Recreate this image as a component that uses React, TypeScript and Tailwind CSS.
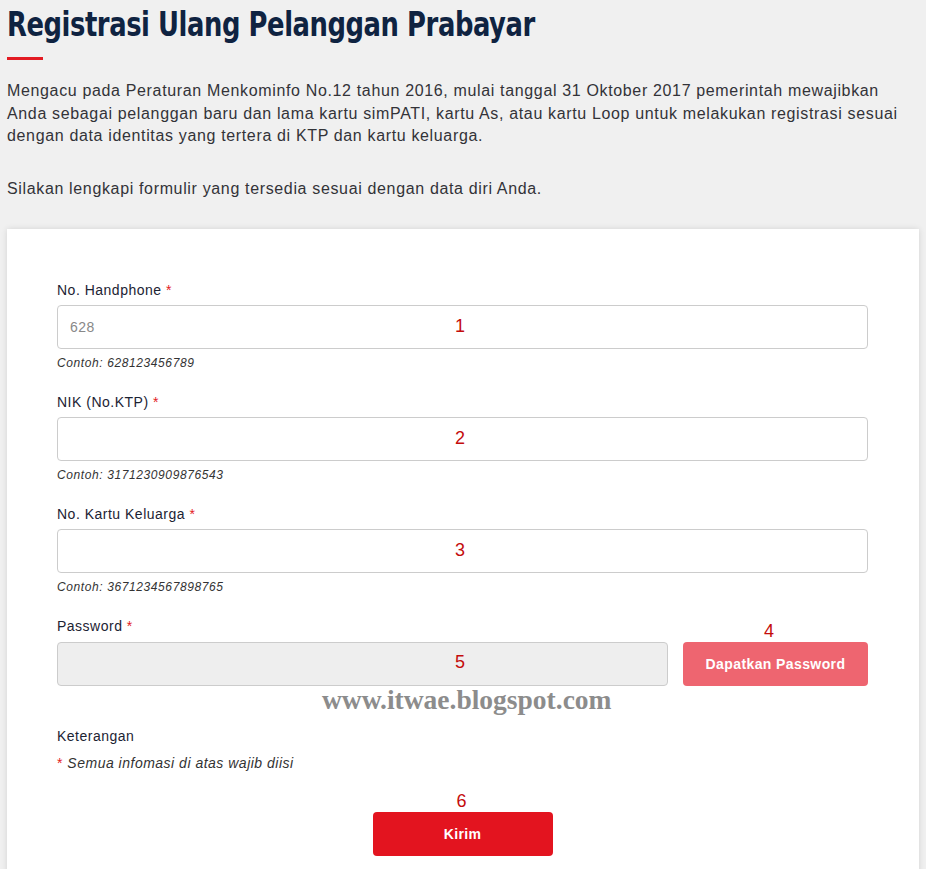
import { ReactNode } from 'react';

const SANS = "font-['Liberation_Sans',Arial,sans-serif]";

function Marker({ children, className = '' }: { children: ReactNode; className?: string }) {
  return (
    <span className={`absolute text-[18px] leading-none tracking-normal text-[#c40c0c] ${SANS} ${className}`}>
      {children}
    </span>
  );
}

function Field({
  label,
  hint,
  placeholder,
  marker,
}: {
  label: string;
  hint: string;
  placeholder?: string;
  marker: string;
}) {
  return (
    <div className="mb-[20px]">
      <label className="block text-[14px] leading-[20px] tracking-[0.5px] text-[#1c2333] mb-[5px]">
        {label} <span className="text-[#e31b23]">*</span>
      </label>
      <div className="relative">
        <input
          type="text"
          placeholder={placeholder}
          className="w-full h-[44px] rounded-[4px] border border-[#cccccc] bg-white px-[12px] text-[14px] tracking-[0.5px] text-[#333] placeholder:text-[#888] outline-none"
        />
        <Marker className="left-[398px] top-[12px]">{marker}</Marker>
      </div>
      <p className="mt-[5px] text-[12px] leading-[18px] tracking-[0.6px] italic text-[#333]">{hint}</p>
    </div>
  );
}

export default function App() {
  return (
    <div className={`min-h-screen bg-[#f0f0f0] ${SANS} overflow-hidden`}>
      <div className="pl-[7px] pr-[7px] pt-[7px]">
        <h1 className="origin-left scale-x-[0.87] whitespace-nowrap font-['DejaVu_Sans_Condensed','DejaVu_Sans',sans-serif] font-stretch-condensed font-bold text-[33px] leading-[36px] tracking-[-0.5px] text-[#0f2341]">
          Registrasi Ulang Pelanggan Prabayar
        </h1>
        <div className="mt-[14px] h-[3px] w-[36px] bg-[#e31b23]" />
        <p className="mt-[20px] text-[16px] leading-[22.5px] tracking-[0.65px] text-[#333338] pr-[20px]">
          Mengacu pada Peraturan Menkominfo No.12 tahun 2016, mulai tanggal 31 Oktober 2017 pemerintah mewajibkan
          Anda sebagai pelanggan baru dan lama kartu simPATI, kartu As, atau kartu Loop untuk melakukan registrasi sesuai
          dengan data identitas yang tertera di KTP dan kartu keluarga.
        </p>
        <p className="mt-[30px] text-[16px] leading-[22.5px] tracking-[0.65px] text-[#333338]">
          Silakan lengkapi formulir yang tersedia sesuai dengan data diri Anda.
        </p>
      </div>

      <div className="ml-[7px] w-[912px] mt-[29px] bg-white shadow-[0_0_6px_rgba(0,0,0,0.12)] pt-[51px] pl-[50px] pr-[51px] pb-[40px] relative">
        <Field label="No. Handphone" hint="Contoh: 628123456789" placeholder="628" marker="1" />
        <Field label="NIK (No.KTP)" hint="Contoh: 3171230909876543" marker="2" />
        <Field label="No. Kartu Keluarga" hint="Contoh: 3671234567898765" marker="3" />

        <div>
          <label className="block text-[14px] leading-[20px] tracking-[0.5px] text-[#1c2333] mb-[6px]">
            Password <span className="text-[#e31b23]">*</span>
          </label>
          <div className="flex">
            <div className="relative flex-1">
              <input
                type="password"
                disabled
                className="w-full h-[44px] rounded-[4px] border border-[#cccccc] bg-[#eeeeee] px-[12px] outline-none"
              />
              <Marker className="left-[398px] top-[11px]">5</Marker>
            </div>
            <div className="relative ml-[15px] w-[185px]">
              <Marker className="left-[81px] -top-[20px]">4</Marker>
              <button className="w-full h-[44px] rounded-[4px] bg-[#ee6570] text-white text-[14px] tracking-[0.4px] font-bold">
                Dapatkan Password
              </button>
            </div>
          </div>
        </div>

        <div className="relative h-[40px]">
          <span className="absolute left-[265px] -top-[1px] font-['Liberation_Serif','Times_New_Roman',serif] font-bold text-[27.5px] leading-[30px] text-[#8c8c8c]">
            www.itwae.blogspot.com
          </span>
        </div>

        <p className="text-[14px] leading-[20px] tracking-[0.5px] text-[#1c2333]">Keterangan</p>
        <p className="mt-[7px] text-[14px] leading-[20px] tracking-[0.5px] italic text-[#333]">
          <span className="not-italic text-[#e31b23]">*</span> Semua infomasi di atas wajib diisi
        </p>

        <div className="mt-[39px] flex justify-center">
          <div className="relative">
            <Marker className="left-[84px] -top-[20px]">6</Marker>
            <button className="w-[180px] h-[44px] rounded-[4px] bg-[#e3141f] text-white text-[14px] tracking-[0.3px] font-bold">
              Kirim
            </button>
          </div>
        </div>
      </div>
    </div>
  );
}
